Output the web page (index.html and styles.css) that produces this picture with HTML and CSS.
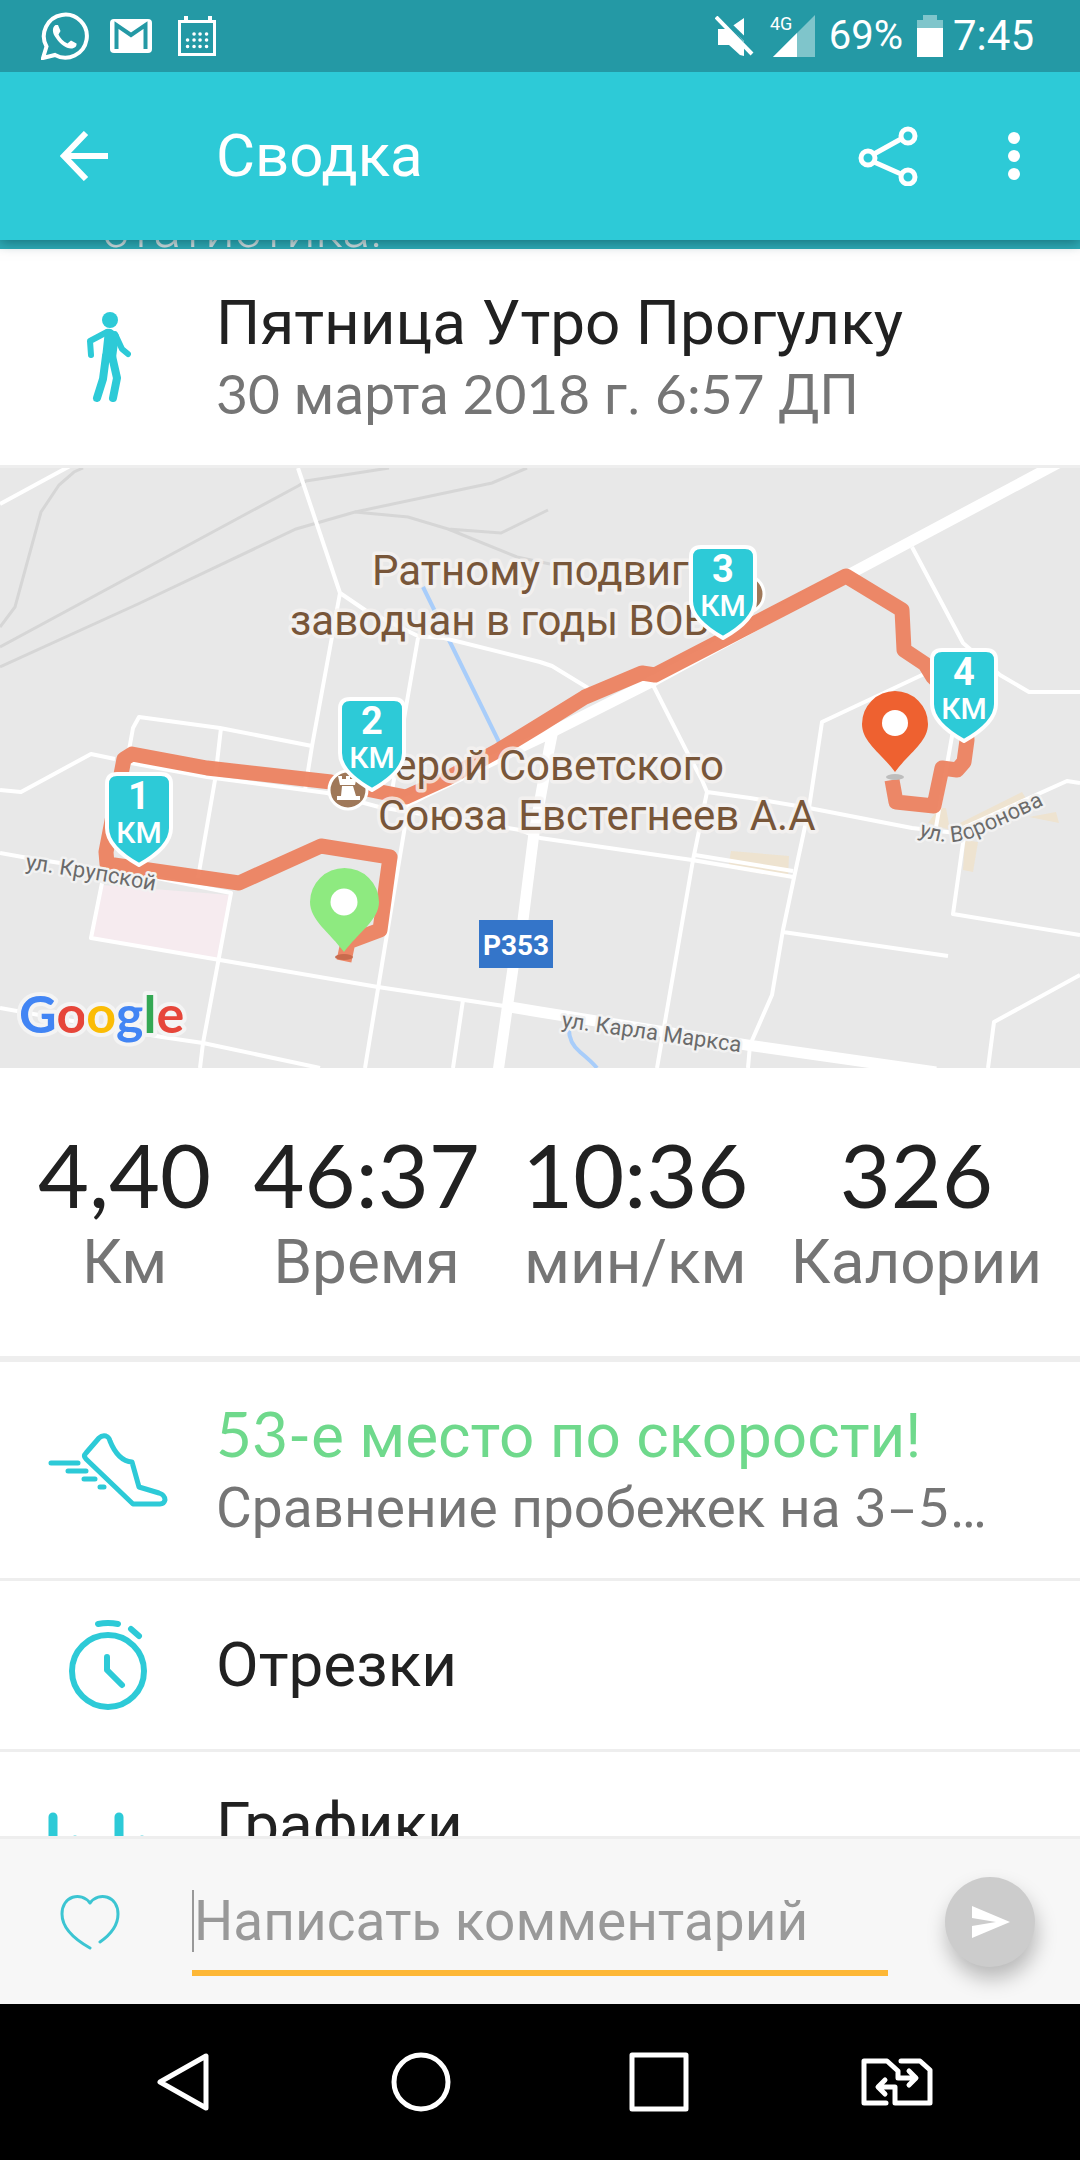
FILE: index.html
```html
<!DOCTYPE html>
<html lang="ru">
<head>
    <meta charset="UTF-8">
    <meta name="viewport" content="width=device-width, initial-scale=1.0">
    <title>Сводка</title>
    <link rel="stylesheet" href="styles.css">
</head>
<body>
    <div class="status-bar">
        <div class="status-icons">
            <svg width="48" height="48" viewBox="0 0 48 48" fill="none">
                <path d="M2 46 L5.5 34.500 A21.500 21.500 0 1 1 14 43 Z" stroke="#fff" stroke-width="4"/>
                <path d="M14.500 13 C11 15 11 21 15 26 C19 32 25 36.500 30 36.500 C34 36.500 36 34 35.500 31.500 L30 28.500 L26.500 31.500 C22 29.500 19 26 17.500 22.500 L19.500 19 L17 13 Z" fill="#fff"/>
            </svg>
            <svg width="42" height="34" viewBox="0 0 42 34">
                <rect width="42" height="34" rx="4" fill="#fff"/>
                <path d="M6.500 30 V6 L21 16 L35.500 6 V30" fill="none" stroke="#2499a5" stroke-width="4"/>
            </svg>
            <svg class="calendar-icon" width="38" height="40" viewBox="0 0 38 40">
                <path d="M1.500 5.500 H36.500 V38.500 H1.500 Z" fill="none" stroke="#fff" stroke-width="3"/>
                <path d="M6 0 h4 v6 h-4z M30 0 h4 v6 h-4z" fill="#fff"/>
                <path d="M16 18 h.1 M22 18 h.1 M28.500 18 h.1 M9.500 24 h.1 M16 24 h.1 M22 24 h.1 M28.500 24 h.1 M9.500 30.500 h.1 M16 30.500 h.1 M22 30.500 h.1 M28.500 30.500 h.1" stroke="#fff" stroke-width="3.500" stroke-linecap="round"/>
            </svg>
        </div>
        <div class="status-info">
            <svg width="40" height="40" viewBox="0 0 40 40">
                <path d="M3 13 H14 L29 28 V40 L25 39 L14 29 H3 Z M16 11 L29 2 V26 Z" fill="#fff"/>
                <path d="M5 -1 L41 34" stroke="#2499a5" stroke-width="4"/>
                <path d="M1 1 L37 38" stroke="#fff" stroke-width="4"/>
            </svg>
            <svg width="46" height="42" viewBox="0 0 46 42">
                <path d="M4 42 L46 0 V42 Z" fill="#7fc5cb"/>
                <path d="M4 42 L28 18 V42 Z" fill="#fff"/>
                <text class="network" x="1" y="15">4G</text>
            </svg>
            <span class="battery-level">69%</span>
            <svg width="26" height="42" viewBox="0 0 26 42">
                <path d="M6 0 H20 V5 H26 V14 H0 V5 H6 Z" fill="#7fc5cb"/>
                <path d="M0 13 H26 V42 H0 Z" fill="#fff"/>
            </svg>
            <span class="clock">7:45</span>
        </div>
    </div>

    <header class="app-bar">
        <button class="icon-button back" aria-label="Назад">
            <svg width="48" height="50" viewBox="0 0 48 50" fill="none" stroke="#fff" stroke-width="6">
                <path d="M48 25 H5 M26 2 L4 25 L26 48"/>
            </svg>
        </button>
        <h1>Сводка</h1>
        <button class="icon-button" aria-label="Поделиться">
            <svg width="60" height="60" viewBox="0 0 60 60" fill="none" stroke="#fff" stroke-width="5">
                <path d="M16 28 L43 13 M16 36 L43 48"/>
                <circle cx="50" cy="10" r="7"/>
                <circle cx="10" cy="32" r="7"/>
                <circle cx="50" cy="51" r="7"/>
            </svg>
        </button>
        <button class="icon-button more" aria-label="Ещё">
            <svg width="12" height="48" viewBox="0 0 12 48" fill="#fff">
                <circle cx="6" cy="6" r="6"/>
                <circle cx="6" cy="24" r="6"/>
                <circle cx="6" cy="42" r="6"/>
            </svg>
        </button>
    </header>

    <main class="content">
        <div class="promo"><span>статистика.</span></div>

        <section class="row">
            <div class="row-icon">
                <svg width="46" height="92" viewBox="0 0 46 92" fill="#2dcad7">
                    <circle cx="25" cy="9" r="8"/>
                    <path d="M20 19 Q25 16 29 20 L34 24 L31 47 L17 47 Z"/>
                    <path d="M22 21 L5 30 L6 44 M30 23 L37 38 L43 43" fill="none" stroke="#2dcad7" stroke-width="6" stroke-linecap="round" stroke-linejoin="round"/>
                    <path d="M21 45 L18 68 L12 87 M27 45 L32 67 L28 87" fill="none" stroke="#2dcad7" stroke-width="8" stroke-linecap="round" stroke-linejoin="round"/>
                </svg>
            </div>
            <div class="row-text summary">
                <h2 class="title">Пятница Утро Прогулку</h2>
                <p class="subtitle"><span class="num">30</span> марта <span class="num">2018</span> г. <span class="num">6:57</span> ДП</p>
            </div>
        </section>

        <svg class="map" viewBox="0 0 1080 600" role="img" aria-label="Карта прогулки">
            <!-- blocks -->
            <path class="hospital" d="M102 417 L230 427 L220 492 L92 470 Z"/>
            <path class="block" d="M731 383 L789 388 L788 410 L728 400 Z M939 340 L946 340 L950 362 L928 355 Z M960 355 L1022 324 L1027 332 L967 364 Z M965 372 L978 374 L973 404 L963 402 Z M1029 349 L1056 344 L1059 355 Z"/>

            <!-- railways -->
            <g class="rail">
                <path d="M83 0 L74 4 L59 17 L41 44 L15 139 L0 159"/>
                <path d="M389 0 L306 13 L298 18 L172 86 L0 179"/>
                <path d="M527 0 L492 15 L355 44 L296 61 L138 136 L0 199"/>
                <path d="M355 44 L408 49 L448 61 L501 65 L548 42 M448 61 L517 89 L550 96"/>
            </g>

            <path class="water" d="M423 119 L499 274 M569 559 Q568 574 580 584 T597 600"/>

            <!-- streets -->
            <g class="street">
                <path d="M298 0 L340 125 L312 278 L305 322 M340 125 L365 142 L418 168 L444 170 L540 194 L552 198 L588 220 M418 170 L406 239 L390 335"/>
                <path d="M0 322 L21 324 L91 286 L115 291 M129 282 L133 260 L139 249 L220 260 L312 278 M221 260 L215 312 L198 410"/>
                <path d="M131 295 L207 309 L327 325 L379 339 L520 362 L540 370 L692 392 L793 409"/>
                <path d="M0 385 L28 390 L157 410 L231 425 L203 575 L200 600 M102 415 L91 470 L220 492 L378 519 L504 538"/>
                <path d="M408 340 L386 472 L365 600 M0 540 L162 569 L203 575 L320 600 M463 532 L453 600"/>
                <path d="M657 600 L667 542 L693 392 L707 324 L702 312 L686 282 L652 215 M707 324 L750 330 L809 340 L912 360 L965 366"/>
                <path d="M948 195 L922 207 L822 254 L809 340 L795 405 L783 462 L772 527 L750 577 L748 600 M783 464 L948 488 M695 387 L793 403"/>
                <path d="M912 79 L963 175 L1000 207 L1029 224 L1080 224 M957 240 L936 359 M967 357 L963 375 L953 446 L1080 467 M963 360 L1067 313 L1080 315 M988 600 L994 554 L1080 507"/>
            </g>
            <path class="street" d="M0 36 L70 -2"/>
            <g class="road">
                <path d="M1060 -6 L846 108 L655 212 L540 270 L424 325 L400 338"/>
                <path d="M553 262 L549 282 L534 365 L523 452 L513 500 L498 604 M504 538 L540 544 L747 577 L936 604"/>
            </g>

            <path class="route" d="M344 493 L348 474 L380 462 L390 389 L321 378 L239 415 L107 396 L106 384 L124 291 L132 286 L207 300 L331 314 L406 329 L448 310 L499 282 L540 257 L585 229 L642 205 L655 207 L846 108 L902 142 L904 182 L925 196 L933 209 L964 240 L967 272 L964 294 L957 302 L942 300 L934 338 L896 334 L892 312"/>

            <!-- places -->
            <g class="place-icon">
                <circle cx="745" cy="126" r="19"/>
                <circle cx="348" cy="322" r="19"/>
            </g>
            <path d="M338 308 h4 v3 h4 v-3 h4 v3 h4 v-3 h3 l-2 9 h-15 z M342 318 h11 l3 10 h4 v4 h-23 v-4 h4 z" fill="#fff"/>
            <g class="place">
                <text x="372" y="117">Ратному подвиг</text>
                <text x="290" y="167">заводчан в годы ВОВ</text>
                <text x="724" y="312" text-anchor="end">Герой Советского</text>
                <text x="378" y="362">Союза Евстегнеев А.А</text>
            </g>

            <!-- street names -->
            <path id="krupskoy" d="M25 401 Q90 410 170 426" fill="none"/>
            <path id="marksa" d="M561 559 L760 587" fill="none"/>
            <path id="voronova" d="M918 367 Q945 379 972 370 Q1010 354 1070 324" fill="none"/>
            <g class="street-name">
                <text><textPath href="#krupskoy">ул. Крупской</textPath></text>
                <text><textPath href="#marksa">ул. Карла Маркса</textPath></text>
                <text><textPath href="#voronova">ул. Воронова</textPath></text>
            </g>

            <rect x="479" y="452" width="74" height="48" fill="#3475c9"/>
            <text class="road-number" x="516" y="487">P353</text>

            <text class="google" x="19" y="565"><tspan fill="#4285f4">G</tspan><tspan fill="#e6463a">o</tspan><tspan fill="#fbbc05">o</tspan><tspan fill="#4285f4">g</tspan><tspan fill="#34a853">l</tspan><tspan fill="#e6463a">e</tspan></text>

            <!-- start and finish pins -->
            <ellipse cx="344" cy="489" rx="9" ry="3" fill="#c96b4d"/>
            <path d="M344 484 C330 465 310 452 310 434 A34.500 34 0 0 1 379 434 C379 452 358 465 344 484 Z" fill="#8eea80"/>
            <circle cx="344" cy="434" r="13.500" fill="#fff"/>
            <ellipse cx="895" cy="309" rx="9" ry="3" fill="#bdbdbd"/>
            <path d="M895 304 C881 285 862 274 862 256 A33 33 0 0 1 928 256 C928 274 909 285 895 304 Z" fill="#ee6130"/>
            <circle cx="895" cy="255" r="13" fill="#fff"/>

            <!-- kilometre markers -->
            <g class="marker" transform="translate(105 304)">
                <path d="M12 2 H56 Q66 2 66 12 V56 C66 72 50 84 34 93 C18 84 2 72 2 56 V12 Q2 2 12 2 Z"/>
                <text class="marker-number" x="34" y="37">1</text>
                <text class="marker-unit" x="34" y="71">КМ</text>
            </g>
            <g class="marker" transform="translate(338 229)">
                <path d="M12 2 H56 Q66 2 66 12 V56 C66 72 50 84 34 93 C18 84 2 72 2 56 V12 Q2 2 12 2 Z"/>
                <text class="marker-number" x="34" y="37">2</text>
                <text class="marker-unit" x="34" y="71">КМ</text>
            </g>
            <g class="marker" transform="translate(689 77)">
                <path d="M12 2 H56 Q66 2 66 12 V56 C66 72 50 84 34 93 C18 84 2 72 2 56 V12 Q2 2 12 2 Z"/>
                <text class="marker-number" x="34" y="37">3</text>
                <text class="marker-unit" x="34" y="71">КМ</text>
            </g>
            <g class="marker" transform="translate(930 180)">
                <path d="M12 2 H56 Q66 2 66 12 V56 C66 72 50 84 34 93 C18 84 2 72 2 56 V12 Q2 2 12 2 Z"/>
                <text class="marker-number" x="34" y="37">4</text>
                <text class="marker-unit" x="34" y="71">КМ</text>
            </g>
        </svg>

        <section class="stats">
            <div class="stat"><span class="stat-value">4,40</span><span class="stat-label">Км</span></div>
            <div class="stat"><span class="stat-value">46:37</span><span class="stat-label">Время</span></div>
            <div class="stat"><span class="stat-value">10:36</span><span class="stat-label">мин/км</span></div>
            <div class="stat"><span class="stat-value">326</span><span class="stat-label">Калории</span></div>
        </section>

        <a class="row" href="#">
            <div class="row-icon">
                <svg width="120" height="74" viewBox="0 0 120 74" fill="none" stroke="#2dcad7" stroke-width="5" stroke-linecap="round" stroke-linejoin="round">
                    <path d="M51 5 Q54 2 58 3 Q61 4 62 8 Q70 28 84 29 L91 54 L111 60 Q117 62 117 67 Q116 71 112 71 L85 71 L38 26 Q35 23 38 20 Z"/>
                    <path d="M3 30 H30 M20 38 H38 M36 46 H47 M52 54 H56"/>
                </svg>
            </div>
            <div class="row-text">
                <h2 class="title record"><span class="num">53-</span>е место по скорости!</h2>
                <p class="subtitle">Сравнение пробежек на <span class="num">3–5</span>…</p>
            </div>
        </a>

        <a class="row small" href="#">
            <div class="row-icon">
                <svg width="78" height="90" viewBox="0 0 78 90" fill="none" stroke="#2dcad7" stroke-width="6" stroke-linecap="round" stroke-linejoin="round">
                    <circle cx="39" cy="51" r="36"/>
                    <path d="M38 37 V50 L53 65"/>
                    <path d="M29 4 Q39 2 49 4 M62 9 L70 16"/>
                </svg>
            </div>
            <div class="row-text">
                <h2 class="title">Отрезки</h2>
            </div>
        </a>

        <a class="row charts" href="#">
            <div class="row-icon">
                <svg width="120" height="96" viewBox="0 0 120 96" fill="none" stroke="#2dcad7" stroke-width="9" stroke-linecap="round">
                    <path d="M5 5 V91 M27 28 V91 M71 5 V91 M94 28 V91"/>
                </svg>
            </div>
            <div class="row-text">
                <h2 class="title">Графики</h2>
            </div>
        </a>
    </main>

    <form class="comment-bar">
        <button type="button" class="icon-button" aria-label="Нравится">
            <svg width="60" height="56" viewBox="0 0 60 56" fill="none" stroke="#3cc5d2" stroke-width="3" stroke-linecap="round" stroke-linejoin="round">
                <path d="M30 54 C14 45 2 34 2 20 C2 2 21 -3 30 9 C39 -3 58 2 58 20 C58 31 50 41 40 48"/>
            </svg>
        </button>
        <div class="field">
            <span class="caret"></span>
            <input type="text" placeholder="Написать комментарий" aria-label="Написать комментарий">
        </div>
        <button type="button" class="send" aria-label="Отправить">
            <svg width="38" height="34" viewBox="0 0 38 34" fill="#fff">
                <path d="M0 1 L38 17 L0 33 V21 L24 17 L0 13 Z"/>
            </svg>
        </button>
    </form>

    <nav class="nav-bar">
        <button class="icon-button" aria-label="Назад">
            <svg width="56" height="60" viewBox="0 0 56 60" fill="none" stroke="#fff" stroke-width="5" stroke-linejoin="round">
                <path d="M51 4 V56 L5 30 Z"/>
            </svg>
        </button>
        <button class="icon-button" aria-label="Домой">
            <svg width="60" height="60" viewBox="0 0 60 60" fill="none" stroke="#fff" stroke-width="5">
                <circle cx="30" cy="30" r="27"/>
            </svg>
        </button>
        <button class="icon-button" aria-label="Недавние">
            <svg width="60" height="60" viewBox="0 0 60 60" fill="none" stroke="#fff" stroke-width="5" stroke-linejoin="round">
                <path d="M3 3 H57 V57 H3 Z"/>
            </svg>
        </button>
        <button class="icon-button" aria-label="Сменить SIM">
            <svg width="72" height="48" viewBox="0 0 72 48" fill="none" stroke="#fff" stroke-width="5" stroke-linecap="round" stroke-linejoin="round">
                <path d="M25 45 H3 V3 H26 L37 13 V20 H54 M48 13 L55 20 L48 27"/>
                <path d="M40 3 H59 L69 12 V45 H34 V29 H18 M24 22 L17 29 L24 36"/>
            </svg>
        </button>
    </nav>
</body>
</html>
```

FILE: styles.css
```css
:root {
    --accent: #2dcad7;
    --accent-dark: #2499a5;
    --line: #eeeeee;
    --text: #212121;
    --text-light: #757575;
}

* {
    box-sizing: border-box;
}

body {
    display: flex;
    flex-direction: column;
    height: 100vh;
    margin: 0;
    font-family: Roboto, sans-serif;
    color: var(--text);
    background-color: #fff;
    overflow: hidden;
}

h1, h2, p {
    margin: 0;
    font-weight: 400;
}

svg {
    display: block;
    flex: none;
}

button {
    padding: 0;
    border: none;
    background: none;
    cursor: pointer;
}

.num {
    font-family: Lato, sans-serif;
}

/* Status bar */

.status-bar {
    display: flex;
    flex: none;
    align-items: center;
    justify-content: space-between;
    height: 72px;
    padding: 0 46px 0 41px;
    color: #fff;
    background-color: var(--accent-dark);
    z-index: 2;
}

.status-icons {
    display: flex;
    align-items: center;
    gap: 21px;
}

.calendar-icon {
    margin-left: 5px;
}

.status-info {
    display: flex;
    align-items: center;
    gap: 14px;
    line-height: 48px;
}

.network {
    font-size: 18px;
    fill: #fff;
}

.battery-level {
    font-size: 40px;
}

.clock {
    font-size: 42px;
    margin-left: -4px;
}

/* App bar */

.app-bar {
    display: flex;
    flex: none;
    align-items: center;
    height: 168px;
    padding: 0 60px;
    color: #fff;
    background-color: var(--accent);
    box-shadow: 0 3px 12px rgba(0, 60, 70, 0.5);
    z-index: 1;
}

.app-bar h1 {
    flex: 1;
    font-size: 60px;
    line-height: 70px;
}

.back {
    width: 156px;
}

.more {
    margin-left: 90px;
}

/* Content */

.content {
    flex: 1;
    min-height: 0;
    overflow: hidden;
}

.promo {
    display: flex;
    align-items: flex-end;
    height: 9px;
    padding-left: 102px;
    overflow: hidden;
    font-size: 52px;
    font-weight: 300;
    line-height: 38px;
    color: #dde5e6;
    background-color: #2fadb8;
}

.row {
    display: flex;
    align-items: center;
    min-height: 219px;
    padding-right: 48px;
    border-bottom: 3px solid var(--line);
    color: inherit;
    text-decoration: none;
}

.row.small {
    min-height: 171px;
}

.row-icon {
    display: flex;
    flex: none;
    justify-content: center;
    width: 216px;
}

.row-text {
    min-width: 0;
}

.row-text.summary {
    padding-top: 4px;
}

.title {
    font-size: 62px;
    line-height: 70px;
}

.subtitle {
    font-size: 55px;
    line-height: 70px;
    color: var(--text-light);
    white-space: nowrap;
}

.record {
    color: #6fd98c;
}

.charts {
    align-items: flex-start;
}

.charts .row-icon {
    padding-top: 60px;
}

.charts .row-text {
    padding-top: 38px;
}

/* Map */

.map {
    width: 100%;
    height: auto;
    background-color: #e8e8e8;
}

.hospital {
    fill: #f6ebef;
}

.block {
    fill: #eee3d0;
}

.rail {
    fill: none;
    stroke: #d6d6d6;
    stroke-width: 3;
}

.water {
    fill: none;
    stroke: #a8cdfa;
    stroke-width: 4;
}

.street {
    fill: none;
    stroke: #fff;
    stroke-width: 4;
    stroke-linejoin: round;
}

.road {
    fill: none;
    stroke: #fff;
    stroke-width: 11;
    stroke-linejoin: round;
}

.route {
    fill: none;
    stroke: #ec7f5c;
    stroke-opacity: 0.93;
    stroke-width: 15;
    stroke-linejoin: round;
}

.place-icon {
    fill: #9f7859;
    stroke: #fff;
    stroke-width: 3;
}

.place {
    font-size: 42px;
    fill: #785639;
    stroke: #f6f3f1;
    stroke-opacity: 0.8;
    stroke-width: 7;
    stroke-linejoin: round;
    paint-order: stroke;
}

.street-name {
    font-size: 22px;
    fill: #6b6b6b;
    stroke: #f2f2f2;
    stroke-width: 5;
    stroke-linejoin: round;
    paint-order: stroke;
}

.road-number {
    font-size: 28px;
    font-weight: 700;
    fill: #fff;
    text-anchor: middle;
}

.google {
    font-family: Lato, sans-serif;
    font-size: 52px;
    font-weight: 700;
    stroke: #f4f4f4;
    stroke-width: 8;
    stroke-linejoin: round;
    paint-order: stroke;
}

.marker path {
    fill: var(--accent);
    stroke: #fff;
    stroke-width: 4;
    stroke-linejoin: round;
}

.marker text {
    fill: #fff;
    text-anchor: middle;
}

.marker-number {
    font-size: 38px;
    font-weight: 700;
}

.marker-unit {
    font-size: 30px;
    font-weight: 500;
}

/* Stats */

.stats {
    display: flex;
    justify-content: space-between;
    padding: 56px 38px;
    border-bottom: 6px solid var(--line);
}

.stat {
    display: flex;
    flex-direction: column;
    align-items: center;
}

.stat-value {
    font-family: Lato, sans-serif;
    font-size: 88px;
    line-height: 100px;
}

.stat-label {
    font-size: 62px;
    line-height: 76px;
    color: var(--text-light);
}

/* Comment bar */

.comment-bar {
    display: flex;
    flex: none;
    align-items: center;
    height: 168px;
    padding: 0 45px 0 60px;
    border-top: 3px solid var(--line);
    background-color: #f7f7f7;
}

.field {
    display: flex;
    flex: 1;
    min-width: 0;
    margin: 0 57px 0 72px;
    padding: 22px 0 18px;
    border-bottom: 6px solid #fdb736;
}

.caret {
    width: 2px;
    background-color: #999;
}

.field input {
    flex: 1;
    min-width: 0;
    height: 62px;
    padding: 0;
    border: none;
    outline: none;
    font-family: inherit;
    font-size: 55px;
    color: var(--text);
    background: none;
}

.field input::placeholder {
    color: #999;
    opacity: 1;
}

.send {
    display: flex;
    align-items: center;
    justify-content: center;
    width: 90px;
    height: 90px;
    padding-left: 2px;
    border-radius: 50%;
    background-color: #ccc;
    box-shadow: 2px 12px 20px rgba(0, 0, 0, 0.25);
}

/* Navigation bar */

.nav-bar {
    display: grid;
    grid-template-columns: repeat(4, 1fr);
    flex: none;
    align-items: center;
    justify-items: center;
    height: 156px;
    padding: 0 64px;
    background-color: #000;
}
```
